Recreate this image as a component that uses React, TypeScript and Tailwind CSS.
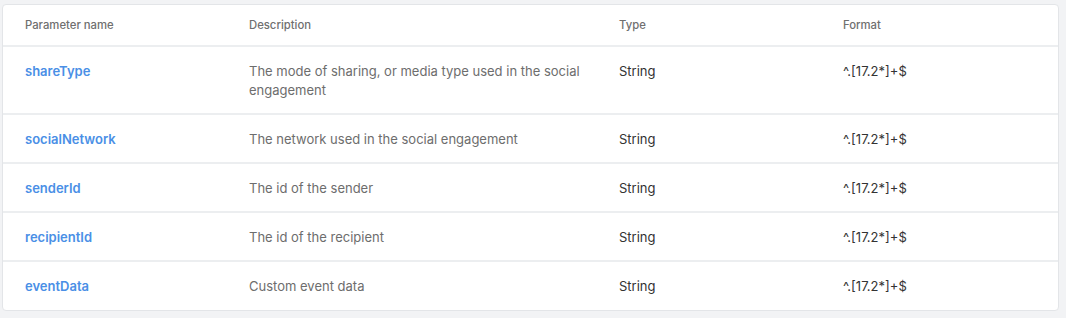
const rows = [
  {
    name: "shareType",
    description: "The mode of sharing, or media type used in the social engagement",
    type: "String",
    format: "^.[17.2*]+$",
  },
  {
    name: "socialNetwork",
    description: "The network used in the social engagement",
    type: "String",
    format: "^.[17.2*]+$",
  },
  { name: "senderId", description: "The id of the sender", type: "String", format: "^.[17.2*]+$" },
  { name: "recipientId", description: "The id of the recipient", type: "String", format: "^.[17.2*]+$" },
  { name: "eventData", description: "Custom event data", type: "String", format: "^.[17.2*]+$" },
];

export default function App() {
  return (
    <div className="min-h-[318px] w-[1066px] bg-[#f2f3f5] pt-[4px] pl-[2px] font-['Inter',sans-serif]">
      <div className="w-[1057px] rounded-[4px] border border-[#e3e5e8] bg-white">
        {/* Header */}
        <div className="flex h-[40px] items-center pl-[22px] text-[11.3px] font-medium text-[#6f6f6f]">
          <div className="w-[224px]">Parameter name</div>
          <div className="w-[370px]">Description</div>
          <div className="w-[224px]">Type</div>
          <div className="flex-1">Format</div>
        </div>

        {/* Rows */}
        {rows.map((row) => (
          <div
            key={row.name}
            className="flex items-start border-t-2 border-[#eceef0] pt-[15px] pb-[13px] pl-[22px] text-[13px] leading-[19px] last:pb-[14px]"
          >
            <div className="w-[224px] font-semibold text-[#4a8fe6]">{row.name}</div>
            <div className="w-[370px] pr-[30px] text-[#6d6d6d]">{row.description}</div>
            <div className="w-[224px] text-[#333333]">{row.type}</div>
            <div className="flex-1 text-[#333333]">{row.format}</div>
          </div>
        ))}
      </div>
    </div>
  );
}
